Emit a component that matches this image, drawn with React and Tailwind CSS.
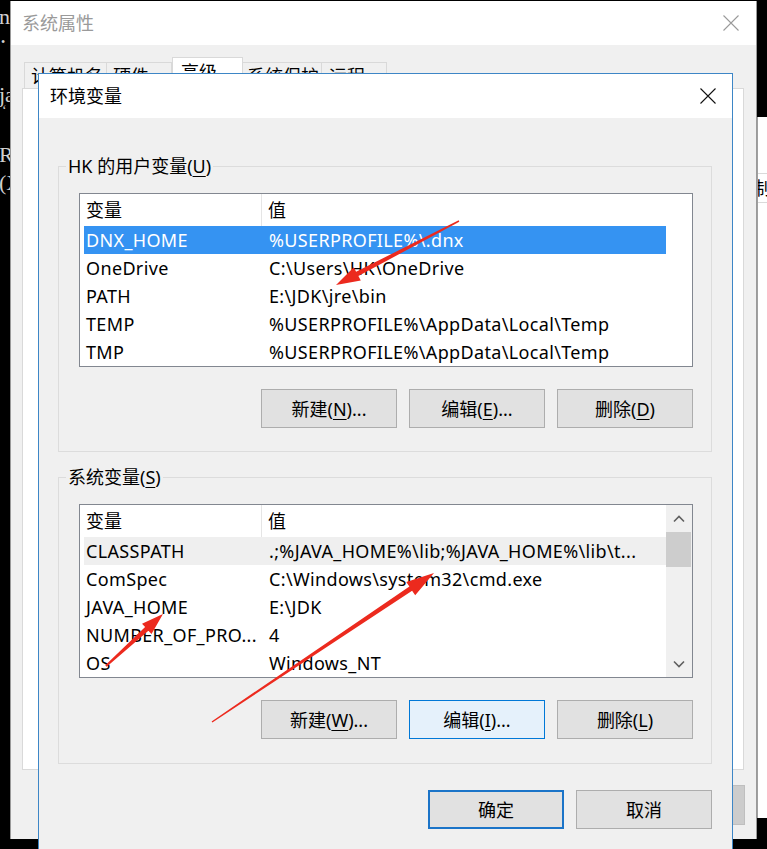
import React from "react";

const U = ({ children }) => <span className="underline underline-offset-[3px] decoration-1">{children}</span>;

function Btn({ children, variant }) {
  let cls = "border border-[#adadad] bg-[#e1e1e1]";
  if (variant === "focus") cls = "border border-[#0078d7] bg-[#e5f1fb]";
  if (variant === "default") cls = "border-2 border-[#1b74c8] bg-[#e1e1e1]";
  return (
    <div className={`w-[136px] h-[39px] flex items-center justify-center text-[18px] leading-[24px] text-black ${cls}`}>
      {children}
    </div>
  );
}

function Chevron({ up }) {
  return (
    <svg width="12" height="8" viewBox="0 0 12 8">
      <path d={up ? "M1 6.5 L6 1.5 L11 6.5" : "M1 1.5 L6 6.5 L11 1.5"} fill="none" stroke="#606060" strokeWidth="1.6" />
    </svg>
  );
}

function ListBox({ rows, selected, hover, scroll }) {
  return (
    <div className="h-[174px] border border-[#828790] bg-white flex">
      <div className="w-[586px] flex flex-col">
        <div className="h-[32px] flex items-center shrink-0">
          <div className="w-[182px] h-full border-r border-[#e5e5e5] pl-[6px] flex items-center">变量</div>
          <div className="pl-[6px]">值</div>
        </div>
        {rows.map((r, i) => {
          let bg = "";
          if (i === selected) bg = "bg-[#3593f2] text-white";
          else if (i === hover) bg = "bg-[#efefef]";
          return (
            <div key={i} className={`h-[28px] ml-[4px] w-[582px] flex items-center shrink-0 whitespace-nowrap tracking-[0.35px] ${bg}`}>
              <div className="w-[178px] pl-[2px] overflow-hidden">{r[0]}</div>
              <div className="pl-[7px]">{r[1]}</div>
            </div>
          );
        })}
      </div>
      {scroll ? (
        <div className="w-[26px] bg-[#f0f0f0] flex flex-col">
          <div className="h-[27px] flex items-center justify-center"><Chevron up /></div>
          <div className="h-[35px] bg-[#cdcdcd] mr-[1px]" />
          <div className="flex-1" />
          <div className="h-[27px] flex items-center justify-center"><Chevron /></div>
        </div>
      ) : (
        <div className="w-[26px]" />
      )}
    </div>
  );
}

function arrowPoints(x1, y1, x2, y2, w0, w1, hl, hw) {
  const dx = x2 - x1, dy = y2 - y1;
  const len = Math.hypot(dx, dy);
  const ux = dx / len, uy = dy / len;
  const nx = -uy, ny = ux;
  const bx = x2 - ux * hl, by = y2 - uy * hl;
  const p = [
    [x1 + (nx * w0) / 2, y1 + (ny * w0) / 2],
    [bx + (nx * w1) / 2, by + (ny * w1) / 2],
    [bx + (nx * hw) / 2, by + (ny * hw) / 2],
    [x2, y2],
    [bx - (nx * hw) / 2, by - (ny * hw) / 2],
    [bx - (nx * w1) / 2, by - (ny * w1) / 2],
    [x1 - (nx * w0) / 2, y1 - (ny * w0) / 2],
  ];
  return p.map((q) => q.map((v) => v.toFixed(1)).join(",")).join(" ");
}

export default function App() {
  const userRows = [
    ["DNX_HOME", "%USERPROFILE%\\.dnx"],
    ["OneDrive", "C:\\Users\\HK\\OneDrive"],
    ["PATH", "E:\\JDK\\jre\\bin"],
    ["TEMP", "%USERPROFILE%\\AppData\\Local\\Temp"],
    ["TMP", "%USERPROFILE%\\AppData\\Local\\Temp"],
  ];
  const sysRows = [
    ["CLASSPATH", ".;%JAVA_HOME%\\lib;%JAVA_HOME%\\lib\\t..."],
    ["ComSpec", "C:\\Windows\\system32\\cmd.exe"],
    ["JAVA_HOME", "E:\\JDK"],
    ["NUMBER_OF_PRO...", "4"],
    ["OS", "Windows_NT"],
  ];

  return (
    <div className="relative w-[767px] h-[849px] bg-black overflow-hidden flex font-['Noto_Sans','Noto_Sans_CJK_SC',sans-serif] text-[18px] leading-[24px] text-black">
      {/* console strip */}
      <div className="w-[10px] shrink-0 overflow-hidden flex flex-col font-['Liberation_Serif',serif] text-[22px] leading-[22px] text-[#d0d0d0]">
        <div className="mt-[6px] -ml-[1px] whitespace-nowrap">n’</div>
        <div className="mt-[8px] ml-[1px] text-[12px] leading-[12px]">•</div>
        <div className="mt-[36px] -ml-[1px] whitespace-nowrap">ja</div>
        <div className="ml-[2px] text-[14px] leading-[10px]">‘</div>
        <div className="mt-[28px] -ml-[1px] whitespace-nowrap">Ru</div>
        <div className="mt-[6px] -ml-[1px] whitespace-nowrap">(X</div>
      </div>

      {/* back window 系统属性 */}
      <div className="w-[747px] h-[838px] mt-[1px] shrink-0 bg-[#f0f0f0] border-l border-r border-[#9a9a9a] flex flex-col">
        <div className="h-[44px] bg-white flex items-center justify-between shrink-0">
          <div className="pl-[11px] text-[#9a9a9a]">系统属性</div>
          <div className="w-[48px] mr-[1px] flex justify-center">
            <svg width="16" height="16" viewBox="0 0 16 16">
              <path d="M0.5 0.5 L15.5 15.5 M15.5 0.5 L0.5 15.5" stroke="#9a9a9a" strokeWidth="1.1" />
            </svg>
          </div>
        </div>
        <div className="flex items-end ml-[13px] mt-[12px] h-[31px] shrink-0">
          <div className="w-[83px] h-[26px] border border-b-0 border-[#d9d9d9] bg-[#f0f0f0] pl-[6px] pt-[1px] whitespace-nowrap">计算机名</div>
          <div className="w-[65px] h-[26px] border border-b-0 border-l-0 border-[#d9d9d9] bg-[#f0f0f0] pl-[6px] pt-[1px] whitespace-nowrap">硬件</div>
          <div className="w-[71px] h-[31px] border border-b-0 border-[#d9d9d9] bg-white pl-[8px] pt-[2px] whitespace-nowrap">高级</div>
          <div className="w-[79px] h-[26px] border border-b-0 border-l-0 border-[#d9d9d9] bg-[#f0f0f0] pl-[4px] pt-[1px] whitespace-nowrap">系统保护</div>
          <div className="w-[65px] h-[26px] border border-b-0 border-l-0 border-[#d9d9d9] bg-[#f0f0f0] pl-[7px] pt-[1px] whitespace-nowrap">远程</div>
        </div>
        <div className="ml-[11px] w-[722px] h-[682px] bg-white border border-[#d9d9d9] shrink-0" />
        <div className="flex justify-end gap-[12px] pr-[11px] mt-[15px]">
          <div className="w-[136px] h-[40px] border border-[#adadad] bg-[#e1e1e1]" />
          <div className="w-[136px] h-[40px] border border-[#adadad] bg-[#e1e1e1]" />
          <div className="w-[136px] h-[40px] border border-[#bfbfbf] bg-[#cccccc]" />
        </div>
      </div>

      {/* right strip */}
      <div className="w-[10px] shrink-0 flex flex-col">
        <div className="h-[117px] bg-black" />
        <div className="h-[701px] bg-white border-l border-[#a0a0a0] overflow-hidden">
          <div className="mt-[56px] h-[30px] border-t border-b border-[#dadada] flex items-center overflow-hidden">
            <span className="-ml-[5px] whitespace-nowrap">制</span>
          </div>
        </div>
        <div className="flex-1 bg-black" />
      </div>

      {/* front window 环境变量 */}
      <div className="absolute left-[38px] top-[73px] w-[695px] h-[790px] border border-[#3d86c6] bg-[#f0f0f0] flex flex-col">
        <div className="h-[44px] bg-white flex items-center justify-between shrink-0">
          <div className="pl-[11px]">环境变量</div>
          <div className="w-[48px] flex justify-center">
            <svg width="16" height="16" viewBox="0 0 16 16">
              <path d="M0.5 0.5 L15.5 15.5 M15.5 0.5 L0.5 15.5" stroke="#111" strokeWidth="1.1" />
            </svg>
          </div>
        </div>

        <div className="ml-[19px] w-[654px] flex flex-col">
          <fieldset className="mt-[36px] border border-[#dcdcdc] px-0 pb-[23px] m-0">
            <legend className="ml-[7px] px-[2px] leading-[24px]">
              HK 的用户变量(<U>U</U>)
            </legend>
            <div className="pl-[20px] pr-[18px] pt-[15px]">
              <ListBox rows={userRows} selected={0} />
              <div className="flex justify-end gap-[12px] mt-[22px]">
                <Btn>新建(<U>N</U>)...</Btn>
                <Btn>编辑(<U>E</U>)...</Btn>
                <Btn>删除(<U>D</U>)</Btn>
              </div>
            </div>
          </fieldset>

          <fieldset className="mt-[13px] border border-[#dcdcdc] px-0 pb-[24px] m-0">
            <legend className="ml-[7px] px-[2px] leading-[24px]">
              系统变量(<U>S</U>)
            </legend>
            <div className="pl-[20px] pr-[18px] pt-[15px]">
              <ListBox rows={sysRows} hover={0} scroll />
              <div className="flex justify-end gap-[12px] mt-[22px]">
                <Btn>新建(<U>W</U>)...</Btn>
                <Btn variant="focus">编辑(<U>I</U>)...</Btn>
                <Btn>删除(<U>L</U>)</Btn>
              </div>
            </div>
          </fieldset>

          <div className="flex justify-end gap-[12px] mt-[26px]">
            <Btn variant="default">确定</Btn>
            <Btn>取消</Btn>
          </div>
        </div>
      </div>

      {/* red annotation arrows */}
      <svg className="absolute left-0 top-0 pointer-events-none" width="767" height="849" viewBox="0 0 767 849">
        <polygon points={arrowPoints(459, 221, 336, 285, 1.5, 5, 24, 15)} fill="#ec2a1e" />
        <polygon points={arrowPoints(212, 722, 434, 573, 1.5, 5, 28, 16)} fill="#ec2a1e" />
        <polygon points={arrowPoints(106, 666, 163, 614, 2, 5, 22, 14)} fill="#ec2a1e" />
      </svg>
    </div>
  );
}
